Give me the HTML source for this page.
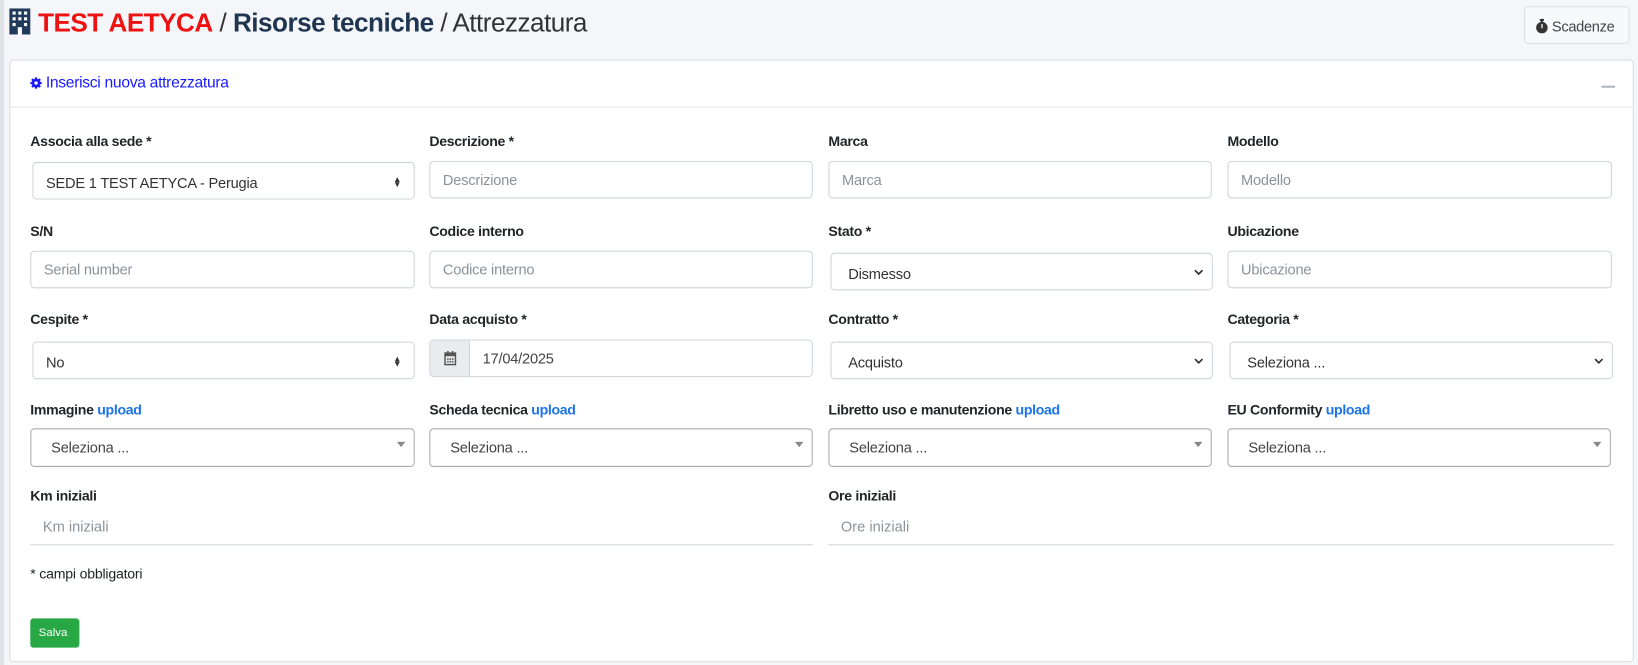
<!DOCTYPE html>
<html><head><meta charset="utf-8">
<style>
*{box-sizing:border-box;margin:0;padding:0}
body{width:1638px;height:665px;background:#f4f6f9;font-family:"Liberation Sans",sans-serif;color:#212529;position:relative;overflow:hidden}
#w{position:absolute;left:0;top:0;width:1568px;height:637px;transform:scale(1.04464);transform-origin:0 0}
.strip{position:absolute;left:0;top:0;width:4px;height:637px;background:#dee2e6}
.title{position:absolute;left:8px;top:8px;font-size:25px;white-space:nowrap;letter-spacing:-0.5px}
.btn{position:absolute;left:1459px;top:6px;width:101px;height:36px;border:1px solid #ddd;border-radius:4px;background:#f8f9fa;font-size:14px;color:#444;padding:10px 0 0 10px;letter-spacing:-0.3px}
.card{position:absolute;left:9px;top:57px;width:1555px;height:577px;background:#fff;border:1px solid #dcdcdc;border-radius:4px}
.hdr{position:absolute;left:0;top:0;width:100%;height:45px;border-bottom:1px solid #e5e5e5}
.hdr span{position:absolute;left:19px;top:13px;font-size:15px;color:#1a1aff;letter-spacing:-0.3px}
.minus{position:absolute;right:17px;top:24px;width:13px;height:2px;background:#adb5bd}
.lbl{position:absolute;font-size:13.5px;font-weight:bold;letter-spacing:-0.3px;white-space:nowrap}
.lbl a{color:#1a73e8}
.inp{position:absolute;height:36px;border:1px solid #ced4da;border-radius:4px;font-size:14px;color:#8a939b;padding:9px 12px;letter-spacing:-0.2px;background:#fff}
.sel{color:#333;padding-top:11px}
.s2{border-color:#aaa;color:#444;padding-left:19px;height:37px}
.arr{position:absolute;right:8px;top:12px;width:0;height:0;border-left:4px solid transparent;border-right:4px solid transparent;border-top:5px solid #888}
.ud{position:absolute;right:12px;top:13px;font-size:8px;line-height:5px;color:#333}
.chev{position:absolute;right:8px;top:13px;width:9px;height:9px}
.ul{position:absolute;height:36px;border-bottom:1px solid #ced4da;font-size:14px;color:#8a939b;padding:10px 12px}
</style></head><body>
<div id="w">
<div class="strip"></div>
<div class="title"><svg width="22" height="25" viewBox="0 0 22 25" style="vertical-align:-3px"><rect x="1" y="0" width="20" height="25" fill="#1f3a5a"/><g fill="#fff"><rect x="4" y="3" width="3" height="3"/><rect x="9.5" y="3" width="3" height="3"/><rect x="15" y="3" width="3" height="3"/><rect x="4" y="8.5" width="3" height="3"/><rect x="9.5" y="8.5" width="3" height="3"/><rect x="15" y="8.5" width="3" height="3"/><rect x="4" y="14" width="3" height="3"/><rect x="15" y="14" width="3" height="3"/><rect x="9" y="18" width="4" height="7"/></g></svg> <b style="color:#ee1111">TEST AETYCA</b> <span style="color:#333">/</span> <b style="color:#1f3550">Risorse tecniche</b> <span style="color:#333">/ Attrezzatura</span></div>
<div class="btn"><svg width="12" height="14" viewBox="0 0 12 14" style="vertical-align:-2px"><rect x="4" y="0" width="4" height="2" fill="#333"/><rect x="5" y="1" width="2" height="3" fill="#333"/><circle cx="6" cy="8.5" r="5.5" fill="#333"/><rect x="5.5" y="5" width="1.2" height="4" fill="#fff"/></svg> Scadenze</div>
<div class="card">
<div class="hdr"><span><svg width="11" height="11" viewBox="0 0 12 12" style="vertical-align:-1px"><circle cx="6" cy="6" r="4.5" fill="#1a1aff"/><g stroke="#1a1aff" stroke-width="2.4"><line x1="6" y1="0" x2="6" y2="12"/><line x1="0" y1="6" x2="12" y2="6"/><line x1="1.8" y1="1.8" x2="10.2" y2="10.2"/><line x1="10.2" y1="1.8" x2="1.8" y2="10.2"/></g><circle cx="6" cy="6" r="1.8" fill="#fff"/></svg> Inserisci nuova attrezzatura</span><div class="minus"></div></div>
</div>
<div class="lbl" style="left:29px;top:128px">Associa alla sede *</div>
<div class="lbl" style="left:411px;top:128px">Descrizione *</div>
<div class="lbl" style="left:793px;top:128px">Marca</div>
<div class="lbl" style="left:1175px;top:128px">Modello</div>
<div class="inp sel" style="left:31px;top:155px;width:366px">SEDE 1 TEST AETYCA - Perugia<div class="ud">▲<br>▼</div></div>
<div class="inp" style="left:411px;top:154px;width:367px">Descrizione</div>
<div class="inp" style="left:793px;top:154px;width:367px">Marca</div>
<div class="inp" style="left:1175px;top:154px;width:368px">Modello</div>
<div class="lbl" style="left:29px;top:214px">S/N</div>
<div class="lbl" style="left:411px;top:214px">Codice interno</div>
<div class="lbl" style="left:793px;top:214px">Stato *</div>
<div class="lbl" style="left:1175px;top:214px">Ubicazione</div>
<div class="inp" style="left:29px;top:240px;width:368px">Serial number</div>
<div class="inp" style="left:411px;top:240px;width:367px">Codice interno</div>
<div class="inp sel" style="left:795px;top:242px;width:366px;padding-left:16px">Dismesso<svg class="chev" viewBox="0 0 10 10"><path d="M1 3l4 4 4-4" stroke="#333" stroke-width="1.8" fill="none"/></svg></div>
<div class="inp" style="left:1175px;top:240px;width:368px">Ubicazione</div>
<div class="lbl" style="left:29px;top:298px">Cespite *</div>
<div class="lbl" style="left:411px;top:298px">Data acquisto *</div>
<div class="lbl" style="left:793px;top:298px">Contratto *</div>
<div class="lbl" style="left:1175px;top:298px">Categoria *</div>
<div class="inp sel" style="left:31px;top:327px;width:366px">No<div class="ud">▲<br>▼</div></div>
<div class="inp" style="left:411px;top:325px;width:367px;padding:0">
 <div style="position:absolute;left:0;top:0;width:38px;height:34px;background:#e9ecef;border-right:1px solid #ced4da;border-radius:4px 0 0 4px"><svg width="12" height="14" viewBox="0 0 12 14" style="position:absolute;left:13px;top:10px"><rect x="1" y="2" width="10" height="11" fill="none" stroke="#555" stroke-width="1.4"/><rect x="1" y="2" width="10" height="3" fill="#555"/><rect x="3" y="0" width="1.5" height="3" fill="#555"/><rect x="7.5" y="0" width="1.5" height="3" fill="#555"/><g fill="#555"><rect x="3" y="7" width="1.5" height="1.5"/><rect x="5.3" y="7" width="1.5" height="1.5"/><rect x="7.6" y="7" width="1.5" height="1.5"/><rect x="3" y="9.5" width="1.5" height="1.5"/><rect x="5.3" y="9.5" width="1.5" height="1.5"/><rect x="7.6" y="9.5" width="1.5" height="1.5"/></g></svg></div>
 <div style="position:absolute;left:50px;top:9px;color:#444">17/04/2025</div></div>
<div class="inp sel" style="left:795px;top:327px;width:366px;padding-left:16px">Acquisto<svg class="chev" viewBox="0 0 10 10"><path d="M1 3l4 4 4-4" stroke="#333" stroke-width="1.8" fill="none"/></svg></div>
<div class="inp sel" style="left:1177px;top:327px;width:367px;padding-left:16px">Seleziona ...<svg class="chev" viewBox="0 0 10 10"><path d="M1 3l4 4 4-4" stroke="#333" stroke-width="1.8" fill="none"/></svg></div>
<div class="lbl" style="left:29px;top:385px">Immagine <a>upload</a></div>
<div class="lbl" style="left:411px;top:385px">Scheda tecnica <a>upload</a></div>
<div class="lbl" style="left:793px;top:385px">Libretto uso e manutenzione <a>upload</a></div>
<div class="lbl" style="left:1175px;top:385px">EU Conformity <a>upload</a></div>
<div class="inp s2" style="left:29px;top:410px;width:368px">Seleziona ...<div class="arr"></div></div>
<div class="inp s2" style="left:411px;top:410px;width:367px">Seleziona ...<div class="arr"></div></div>
<div class="inp s2" style="left:793px;top:410px;width:367px">Seleziona ...<div class="arr"></div></div>
<div class="inp s2" style="left:1175px;top:410px;width:367px">Seleziona ...<div class="arr"></div></div>
<div class="lbl" style="left:29px;top:467px">Km iniziali</div>
<div class="lbl" style="left:793px;top:467px">Ore iniziali</div>
<div class="ul" style="left:29px;top:486px;width:749px">Km iniziali</div>
<div class="ul" style="left:793px;top:486px;width:752px">Ore iniziali</div>
<div style="position:absolute;left:29px;top:542px;font-size:13.5px;letter-spacing:-0.2px">* campi obbligatori</div>
<div style="position:absolute;left:29px;top:592px;width:47px;height:28px;background:#28a745;border-radius:3px;color:#fff;font-size:11px;padding:8px 0 0 8px">Salva</div>
</div>
</body></html>
